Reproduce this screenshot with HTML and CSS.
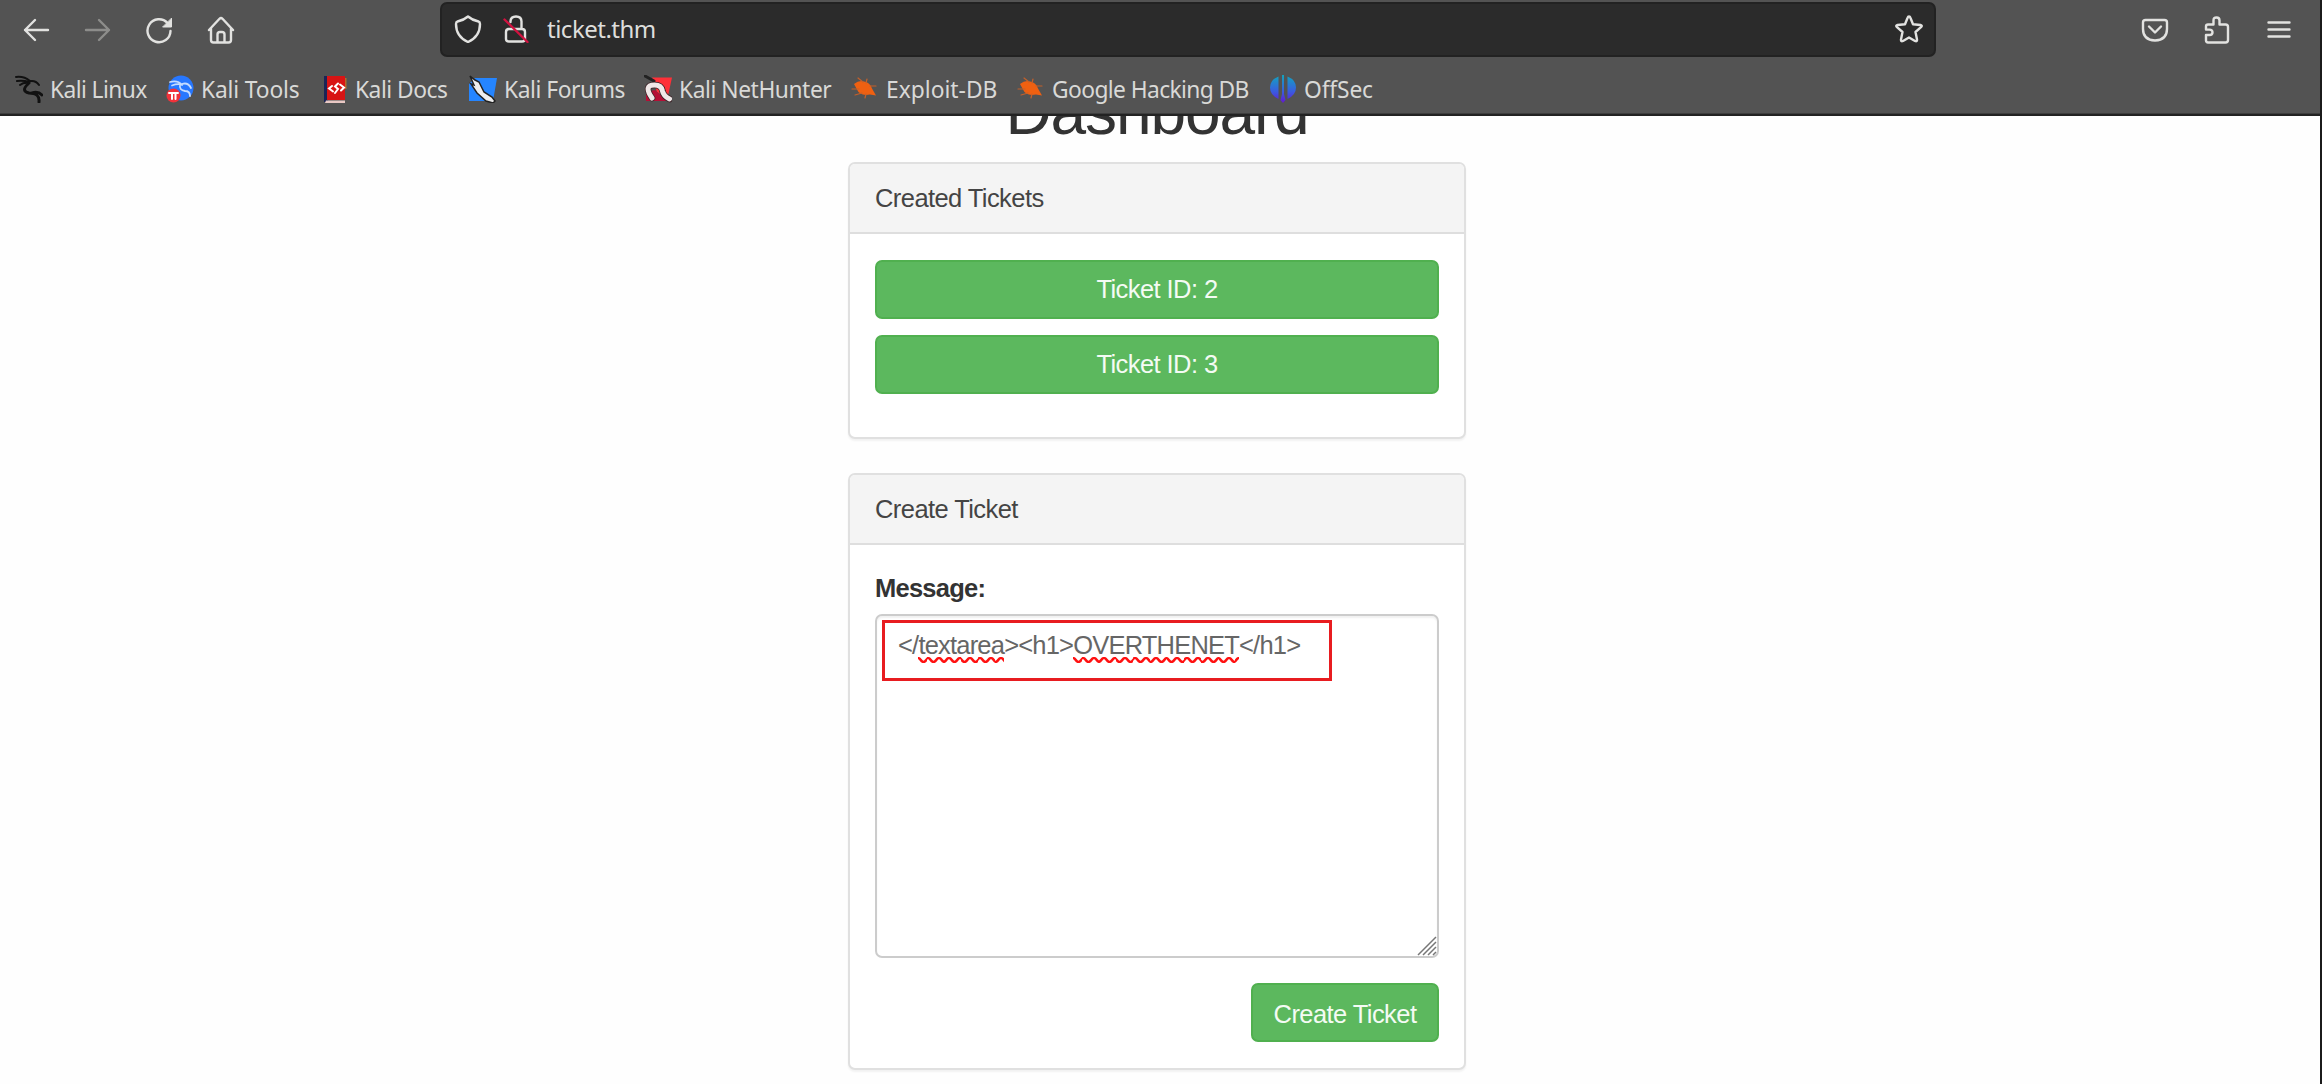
FILE: index.html
```html
<!DOCTYPE html>
<html lang="en">
<head>
<meta charset="utf-8">
<title>Dashboard</title>
<link rel="stylesheet" href="styles.css">
</head>
<body>
<div class="window">
<header class="chrome">
  <div class="toolbar">
    <nav class="nav-buttons">
      <svg class="ico" viewBox="0 0 28 28"><path d="M26 14H3M13 4L3 14l10 10"/></svg>
      <svg class="ico dim" viewBox="0 0 28 28"><path d="M2 14h23M15 4l10 10-10 10"/></svg>
      <svg class="ico" viewBox="0 0 28 28"><path d="M22.500 7A11.500 11.500 0 1 0 25.500 15"/><path class="fill" d="M26.500 2.500v8.500h-8.500z"/></svg>
      <svg class="ico" viewBox="0 0 28 28"><path d="M2 14L12.500 2.800q1.500-1.500 3 0L26 14M4 12.500V24q0 2.500 2.500 2.500h15q2.500 0 2.500-2.500V12.500M10.500 26.500V18.500q0-2.500 2.500-2.500h2q2.500 0 2.500 2.500v8"/></svg>
    </nav>
    <div class="urlbar">
      <svg class="ico" viewBox="0 0 28 28"><path d="M14 1.500c3.500 3 7 4.300 10.500 5 1.200.3 1.500 1 1.500 2.500 0 8-3 14-12 18C5 23 2 17 2 9c0-1.500.3-2.200 1.500-2.500C7 5.800 10.500 4.500 14 1.500z"/></svg>
      <svg class="ico lock" viewBox="0 0 28 28"><path d="M8.500 7V6.500q0-5 5.500-5t5.500 5V14M6 14h14q3 0 3 3v7q0 2.500-3 2.500H7q-3 0-3-2.500v-7q0-3 3-3"/><path class="slash" d="M2.500 4.500l23 22.500"/></svg>
      <span class="url">ticket.thm</span>
      <svg class="ico star" viewBox="0 0 28 28"><path d="M14 1.500q1 0 1.500 1.500l2.500 6.200 7.500.8q2.200.5.500 2.200L20.500 17l1.500 7.500q.2 2.500-2 1.500l-6-3.500L8 26q-2.200 1-2-1.500L7.500 17 2 12.200Q.3 10.500 2.500 10l7.500-.8L12.500 3Q13 1.500 14 1.500z"/></svg>
    </div>
    <div class="actions">
      <svg class="ico" viewBox="0 0 28 28"><path d="M4.500 4h19q2.500 0 2.500 2.500V13q0 11-12 11.500Q2 24 2 13V6.500Q2 4 4.500 4zM8 10.500l6 6 6-6"/></svg>
      <svg class="ico" viewBox="0 0 28 28"><path d="M5 8.500h5.500V4.500q0-3 3-3t3 3v4h6q2.500 0 2.500 2.500v13q0 2.500-2.500 2.500H5q-2 0-2-2v-5.500h3.500q3 0 3-2.700t-3-2.700H3V10.500q0-2 2-2z"/></svg>
      <svg class="ico menu" viewBox="0 0 28 28"><path d="M3.500 6.500h21M3.500 13.500h21M3.500 20.500h21"/></svg>
    </div>
  </div>
  <nav class="bookmarks">
    <a class="bm linux"><svg viewBox="0 0 28 28"><path class="dragon" d="M1 2q8-1 14 4M2 6q6-1 12 1M5 10q4-3 9-2M12 7q8-3 12 3"/><path class="dragon body" d="M14 8Q5 16 14 18q11 0 10 9M17 18q6-2 10 2"/></svg><span>Kali Linux</span></a>
    <a class="bm tools"><svg viewBox="0 0 28 28"><circle cx="15" cy="13" r="12.500" fill="#2777ff"/><path class="whitedragon" d="M4 7q8-2 12 3M6 10.500q5-2 9-1M16 9q6-2 9 4M14 10q-1 5 5 6 5 0 5 5"/><circle cx="7.500" cy="20.500" r="7" fill="#f0323a"/><path class="whitepi" d="M3 18h9M6 18v6M9.500 18v6"/></svg><span>Kali Tools</span></a>
    <a class="bm docs"><svg viewBox="0 0 28 28"><path fill="#1b2457" d="M3 1h4v26H3z"/><path fill="#d81414" d="M6 1h18v24H6z"/><path fill="#b26a2c" d="M24 3h1.500v11H24z"/><path fill="#e9c8c4" d="M5 25.500h19V28H4z"/><path class="code" d="M11 11l-3 2.500 4 3M19 9.500l4 3-3 3M17 8.500l-3 3 3 2.500-3 4"/></svg><span>Kali Docs</span></a>
    <a class="bm forums"><svg viewBox="0 0 28 28"><path fill="#2585ff" d="M6 3h22l-4 23H0V9z"/><path fill="#eee" stroke="#222" d="M1 1l5 4 4 2 5 10 8 5 3 4-2 2-7-2-9-8-6-9 3 1z"/></svg><span>Kali Forums</span></a>
    <a class="bm hunter"><svg viewBox="0 0 28 28"><path fill="#ff3038" d="M8 2.500h20L23.500 23 13 17z"/><path fill="#b60f36" d="M2 17l9-2 12 11H2z"/><path stroke="#222" stroke-width="3" d="M1 1l9 5"/><path class="neck-edge" d="M8 23Q-1 10 10.500 10q7 0 8 6 1 5 7 8"/><path class="hunter-neck" d="M8 23Q-1 10 10.500 10q7 0 8 6 1 5 7 8"/></svg><span>Kali NetHunter</span></a>
    <a class="bm exploit"><svg viewBox="0 0 28 28"><use href="#bug"/></svg><span>Exploit-DB</span></a>
    <a class="bm google"><svg viewBox="0 0 28 28"><g id="bug"><path fill="#ef6011" d="M3 9q5-4 10-2.500 6 1 8 7l4 7-6-1q-10 2-13-5z"/><path stroke="#c4602a" stroke-width="1.200" d="M7 3l5 4M16 4l-1 4M1 14l7 0M4 20l7-2M14 23l1-4M19 11l6 0"/></g></svg><span>Google Hacking DB</span></a>
    <a class="bm offsec"><svg viewBox="0 0 28 28"><defs><linearGradient id="og" gradientUnits="userSpaceOnUse" x1="0" y1="0" x2="0" y2="28"><stop stop-color="#12a5bd"/><stop offset=".6" stop-color="#3a5be0"/><stop offset="1" stop-color="#6417d0"/></linearGradient></defs><path fill="url(#og)" d="M9.500 1.500V24Q1 20 1 12.500T9.500 1.500zM18.500 1.500V24Q27 20 27 12.500T18.500 1.500zM13 0h2v19l1.500 6-2.500 3-2.500-3 1.500-6z"/></svg><span>OffSec</span></a>
  </nav>
</header>
<main class="page">
  <h1 class="title">Dashboard</h1>
  <section class="panel">
    <div class="panel-heading">Created Tickets</div>
    <div class="panel-body tickets">
      <a class="btn">Ticket ID: 2</a>
      <a class="btn">Ticket ID: 3</a>
    </div>
  </section>
  <section class="panel">
    <div class="panel-heading">Create Ticket</div>
    <div class="panel-body form">
      <div class="label">Message:</div>
      <div class="message">&lt;/<span class="typo">textarea</span>&gt;&lt;h1&gt;<span class="typo">OVERTHENET</span>&lt;/h1&gt;<div class="highlight"></div>
        <svg class="grip" viewBox="0 0 20 20"><path d="M1 19L19 1M6 19L19 6M11 19l8-8M16 19l3-3"/></svg>
      </div>
      <a class="btn submit">Create Ticket</a>
    </div>
  </section>
</main>
</div>
</body>
</html>
```
FILE: styles.css
```css
* { box-sizing: border-box; }
body { margin: 0; background: #fefefe; }
.window { height: 1084px; overflow: hidden; border-right: 2px solid #1b1b1b; }

.chrome { position: relative; z-index: 1; height: 116px; background: #535353; border-bottom: 2px solid #222; box-shadow: inset 0 -1px #3e3e3e; }
.toolbar { display: flex; height: 60px; padding-top: 2px; }
.ico { width: 28px; height: 28px; flex: none; fill: none; stroke: #e2e2e0; stroke-width: 2.4; stroke-linecap: round; stroke-linejoin: round; }
.ico .fill { fill: #e2e2e0; stroke-width: 1; }
.ico.dim { stroke: #8d8d8b; }
.ico .slash { stroke: #d1123f; }
.nav-buttons { display: flex; width: 440px; padding: 14px 0 0 22px; gap: 33.500px; }
.urlbar { display: flex; width: 1496px; height: 55px; padding: 11px 11px 0 12px; background: #2b2b2b; border: 2px solid #222; border-radius: 7px; }
.lock { margin-left: 20px; }
.url { margin-left: 17px; font: 24px/28px "Noto Sans", sans-serif; letter-spacing: -.5px; color: #dededc; }
.star { margin-left: auto; }
.actions { display: flex; gap: 34px; padding: 14px 0 0 205px; }

.bookmarks { display: flex; height: 54px; align-items: center; padding: 4px 0 0 15px; font: 22.800px/30px "Noto Sans", sans-serif; color: #d9d9d7; }
.bm { display: flex; align-items: center; gap: 7px; white-space: nowrap; flex: none; }
.bm span { margin-top: 2px; }
.bm svg { width: 28px; height: 28px; fill: none; stroke-linecap: round; stroke-width: 1.5; flex: none; }
.linux { width: 151px; letter-spacing: -.6px; }
.tools { width: 155px; letter-spacing: -.15px; }
.docs { width: 148px; letter-spacing: -.5px; }
.docs span { margin-left: -1px; }
.forums { width: 175px; letter-spacing: -.45px; }
.hunter { width: 207px; letter-spacing: -.45px; }
.exploit { width: 166px; }
.google { width: 252px; letter-spacing: -.6px; }
.offsec { letter-spacing: -.15px; }
.dragon { stroke: #111; stroke-width: 2; }
.dragon.body { stroke-width: 3; }
.whitedragon { stroke: #c5dcff; stroke-width: 1.8; }
.whitepi { stroke: #fff; stroke-width: 2; }
.code { stroke: #fff; stroke-width: 2; }
.neck-edge { stroke: #3a2226; stroke-width: 6.5; }
.hunter-neck { stroke: #f0e8e8; stroke-width: 5; }

.page { width: 618px; margin: 0 0 0 848px; font: 25.500px/35px "Liberation Sans", Arial, sans-serif; letter-spacing: -.57px; color: #333; }
.title { margin: -39px 0 0; height: 84.500px; font-size: 64px; line-height: 70px; font-weight: 400; letter-spacing: -1.100px; text-align: center; }
.panel { border: 2px solid #e0e0e0; border-radius: 7px; background: #fff; box-shadow: 0 2px 2px rgba(0,0,0,.05); margin-bottom: 34px; }
.panel-heading { height: 70px; padding: 17px 25px 0; background: #f4f4f4; border-bottom: 2px solid #dedede; border-radius: 5px 5px 0 0; color: #444; }
.panel-body { padding: 26px 25px; }
.tickets { display: grid; gap: 16.500px; height: 203px; align-content: start; }
.btn { display: block; height: 59px; padding: 10px 0 0; border: 2px solid #50b04f; border-radius: 7px; background: #5cb85e; color: #f4fbf4; text-align: center; white-space: nowrap; }
.form { display: flex; flex-direction: column; height: 523px; }
.label { font-weight: 700; height: 43px; letter-spacing: -.75px; }
.message { position: relative; height: 344px; padding: 12px 21px; border: 2px solid #ccc; border-radius: 7px; box-shadow: inset 0 2px 2px rgba(0,0,0,.06); color: #666; letter-spacing: -.8px; }
.typo { padding-bottom: 4px; background: url("data:image/svg+xml,%3Csvg xmlns='http://www.w3.org/2000/svg' width='10.400' height='6' viewBox='0 0 10.400 6'%3E%3Cpath d='M-2.600 3Q0-1 2.600 3T7.800 3T13 3' fill='none' stroke='%23f11' stroke-width='2.400'/%3E%3C/svg%3E") repeat-x left bottom; }
.highlight { position: absolute; left: 5px; top: 4px; width: 450px; height: 61px; border: 3px solid #e81c20; }
.grip { position: absolute; right: 0; bottom: 0; width: 20px; height: 20px; stroke: #777; stroke-width: 1.5; fill: none; }
.submit { align-self: flex-end; width: 188px; margin-top: 25px; padding-top: 12px; flex: none; }
```
